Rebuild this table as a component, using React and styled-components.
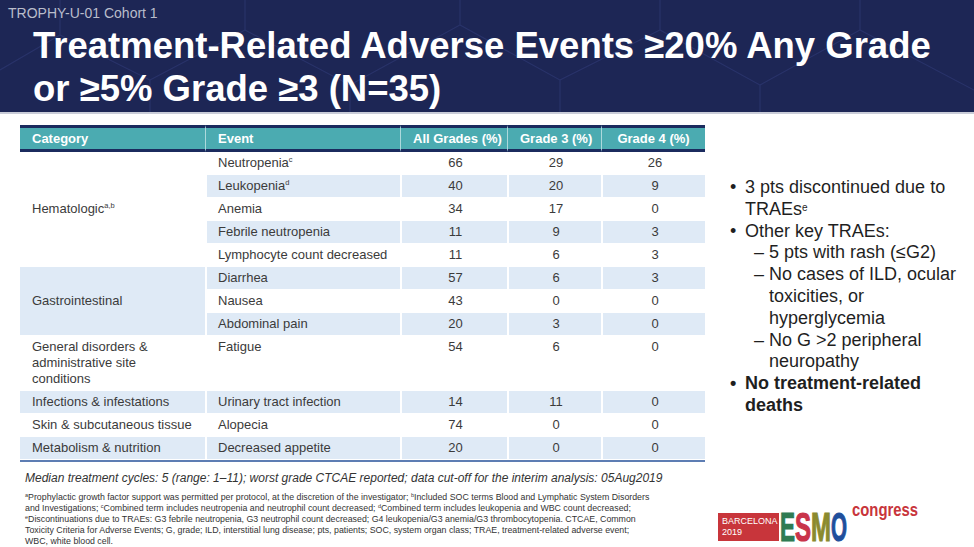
import React from "react";
import styled, { createGlobalStyle } from "styled-components";

const GlobalStyle = createGlobalStyle`
  * { box-sizing: border-box; }
  body {
    margin: 0;
    background: #fff;
    font-family: "Liberation Sans", Arial, sans-serif;
  }
`;

// --- Slide frame ---
const Slide = styled.div`
  width: 974px;
  height: 547px;
  overflow: hidden;
  display: flex;
  flex-direction: column;
  background: #fff;
`;

const Header = styled.header`
  position: relative;
  height: 115px;
  background: #1d2655;
  border-bottom: 2px solid #c9ccd8;
  overflow: hidden;
`;

const HexPattern = styled.svg`
  position: absolute;
  inset: 0;
  pointer-events: none;
`;

const HeaderText = styled.div`
  position: relative;
`;

const Kicker = styled.div`
  padding: 5px 0 0 8px;
  font-size: 14px;
  line-height: 17px;
  color: #b9bdcb;
`;

const Title = styled.h1`
  margin: 0;
  padding: 2px 0 0 33px;
  font-size: 36.5px;
  line-height: 43px;
  font-weight: bold;
  color: #fff;
`;

const Body = styled.div`
  flex: 1;
  display: flex;
`;

const LeftCol = styled.div`
  width: 705px;
  padding: 11px 0 0 20px;
  display: flex;
  flex-direction: column;
`;

const RightCol = styled.div`
  flex: 1;
  display: flex;
  flex-direction: column;
  justify-content: space-between;
`;

// --- Table ---
const Table = styled.table`
  width: 685px;
  table-layout: fixed;
  border-collapse: separate;
  border-spacing: 0;
  font-size: 13px;
  color: #3b3b3b;
  border-bottom: 2px solid #5d7db3;
`;

const HeadRow = styled.tr`
  background: #4babb1;
`;

const Th = styled.th`
  height: 27px;
  padding: 0 12px;
  border-top: 3px solid #1b2b5e;
  border-bottom: 3px solid #1b2b5e;
  border-left: ${(p) => (p.$first ? "none" : "1px solid rgba(255,255,255,0.55)")};
  color: #fff;
  font-weight: bold;
  font-size: 13px;
  line-height: 16px;
  text-align: ${(p) => (p.$center ? "center" : "left")};
  white-space: nowrap;
`;

const Td = styled.td`
  padding: 3px 10px 3px 12px;
  line-height: 16px;
  background: ${(p) => (p.$shade ? "#dfeaf6" : "#fff")};
  border-bottom: 1px solid #fff;
  border-left: ${(p) => (p.$first ? "none" : "2px solid #fff")};
  text-align: ${(p) => (p.$center ? "center" : "left")};
  vertical-align: ${(p) => (p.$top ? "top" : "middle")};
  padding-left: ${(p) => (p.$event ? "11px" : "12px")};
`;

const Sup = styled.sup`
  font-size: 7.5px;
  line-height: 0;
  vertical-align: 5px;
`;

// --- Notes ---
const Note = styled.p`
  margin: 9px 0 0 5px;
  font-size: 12px;
  line-height: 15px;
  font-style: italic;
  color: #333;
`;

const Footnotes = styled.div`
  margin: 6px 0 0 5px;
  font-size: 8.8px;
  line-height: 11px;
  color: #333;
`;

const FootLine = styled.div`
  white-space: nowrap;
`;

const FnSup = styled.sup`
  font-size: 5.5px;
  line-height: 0;
  vertical-align: 3px;
`;

// --- Bullets ---
const BulletList = styled.ul`
  list-style: none;
  margin: 63px 0 0 0;
  padding: 0 0 0 25px;
  font-size: 18px;
  line-height: 21.8px;
  color: #1f1f1f;
`;

const Bullet = styled.li`
  position: relative;
  padding-left: 15px;
  font-weight: ${(p) => (p.$bold ? "bold" : "normal")};

  &::before {
    content: "•";
    position: absolute;
    left: 0;
    top: 0;
  }
`;

const SubList = styled.ul`
  list-style: none;
  margin: 0;
  padding: 0 0 0 10px;
`;

const SubBullet = styled.li`
  position: relative;
  padding-left: 14px;

  &::before {
    content: "–";
    position: absolute;
    left: -1px;
    top: 0;
  }
`;

const BulletSup = styled.sup`
  font-size: 10px;
  line-height: 0;
  vertical-align: 4px;
`;

// --- Logo ---
const Logo = styled.div`
  display: flex;
  align-items: flex-end;
  margin: 0 0 6px 13px;
  height: 40px;
`;

const CityBox = styled.div`
  width: 61px;
  height: 28px;
  background: #c8353b;
  color: #fff;
  font-size: 9px;
  line-height: 11px;
  padding: 3px 0 0 4px;
`;

const EsmoMark = styled.svg`
  display: block;
  margin-left: 1px;
  overflow: visible;
  font-family: "Liberation Sans", Arial, sans-serif;
`;

const hematologic = [
  { event: "Neutropenia", sup: "c", all: 66, g3: 29, g4: 26 },
  { event: "Leukopenia", sup: "d", all: 40, g3: 20, g4: 9 },
  { event: "Anemia", all: 34, g3: 17, g4: 0 },
  { event: "Febrile neutropenia", all: 11, g3: 9, g4: 3 },
  { event: "Lymphocyte count decreased", all: 11, g3: 6, g4: 3 },
];

const gastro = [
  { event: "Diarrhea", all: 57, g3: 6, g4: 3 },
  { event: "Nausea", all: 43, g3: 0, g4: 0 },
  { event: "Abdominal pain", all: 20, g3: 3, g4: 0 },
];

const singles = [
  { cat: "General disorders & administrative site conditions", event: "Fatigue", all: 54, g3: 6, g4: 0, top: true },
  { cat: "Infections & infestations", event: "Urinary tract infection", all: 14, g3: 11, g4: 0, shade: true },
  { cat: "Skin & subcutaneous tissue", event: "Alopecia", all: 74, g3: 0, g4: 0 },
  { cat: "Metabolism & nutrition", event: "Decreased appetite", all: 20, g3: 0, g4: 0, shade: true },
];

const esmoLetters = [
  { ch: "E", x: 0, w: 15, color: "#2f7b52" },
  { ch: "S", x: 15, w: 16, color: "#c9344a" },
  { ch: "M", x: 31, w: 20, color: "#8b8a2e" },
  { ch: "O", x: 51, w: 16, color: "#1f4f9c" },
];

function EventCells({ row, shade, top }) {
  return (
    <>
      <Td $event $shade={shade} $top={top}>
        {row.event}
        {row.sup && <Sup>{row.sup}</Sup>}
      </Td>
      <Td $center $shade={shade} $top={top}>{row.all}</Td>
      <Td $center $shade={shade} $top={top}>{row.g3}</Td>
      <Td $center $shade={shade} $top={top}>{row.g4}</Td>
    </>
  );
}

function HexLines() {
  return (
    <HexPattern width="974" height="115" viewBox="0 0 974 115">
      <g stroke="#29336a" strokeWidth="1.1" fill="none">
        <path d="M0 70 L60 35 L60 -10" />
        <path d="M60 35 L150 80 L150 130" />
        <path d="M150 80 L245 30 L245 -10" />
        <path d="M245 30 L350 85 L350 130" />
        <path d="M350 85 L460 25 L460 -10" />
        <path d="M460 25 L560 80 L560 130" />
        <path d="M560 80 L660 30 L660 -10" />
        <path d="M660 30 L760 85 L760 130" />
        <path d="M760 85 L860 30 L860 -10" />
        <path d="M860 30 L974 90" />
      </g>
    </HexPattern>
  );
}

export default function App() {
  return (
    <>
      <GlobalStyle />
      <Slide>
        <Header>
          <HexLines />
          <HeaderText>
            <Kicker>TROPHY-U-01 Cohort 1</Kicker>
            <Title>
              Treatment-Related Adverse Events ≥20% Any Grade
              <br />
              or ≥5% Grade ≥3 (N=35)
            </Title>
          </HeaderText>
        </Header>

        <Body>
          <LeftCol>
            <Table>
              <colgroup>
                <col style={{ width: 185 }} />
                <col style={{ width: 195 }} />
                <col style={{ width: 107 }} />
                <col style={{ width: 94 }} />
                <col style={{ width: 104 }} />
              </colgroup>
              <thead>
                <HeadRow>
                  <Th $first>Category</Th>
                  <Th>Event</Th>
                  <Th $center>All Grades (%)</Th>
                  <Th $center>Grade 3 (%)</Th>
                  <Th $center>Grade 4 (%)</Th>
                </HeadRow>
              </thead>
              <tbody>
                {hematologic.map((row, i) => (
                  <tr key={row.event}>
                    {i === 0 && (
                      <Td $first rowSpan={hematologic.length}>
                        Hematologic<Sup>a,b</Sup>
                      </Td>
                    )}
                    <EventCells row={row} shade={i % 2 === 1} />
                  </tr>
                ))}
                {gastro.map((row, i) => (
                  <tr key={row.event}>
                    {i === 0 && (
                      <Td $first $shade rowSpan={gastro.length}>
                        Gastrointestinal
                      </Td>
                    )}
                    <EventCells row={row} shade={i % 2 === 0} />
                  </tr>
                ))}
                {singles.map((row) => (
                  <tr key={row.event}>
                    <Td $first $shade={row.shade} $top={row.top}>
                      {row.cat}
                    </Td>
                    <EventCells row={row} shade={row.shade} top={row.top} />
                  </tr>
                ))}
              </tbody>
            </Table>

            <Note>
              Median treatment cycles: 5 (range: 1–11); worst grade CTCAE reported; data cut-off for the interim analysis: 05Aug2019
            </Note>

            <Footnotes>
              <FootLine>
                <FnSup>a</FnSup>Prophylactic growth factor support was permitted per protocol, at the discretion of the investigator;{" "}
                <FnSup>b</FnSup>Included SOC terms Blood and Lymphatic System Disorders
              </FootLine>
              <FootLine>
                and Investigations; <FnSup>c</FnSup>Combined term includes neutropenia and neutrophil count decreased;{" "}
                <FnSup>d</FnSup>Combined term includes leukopenia and WBC count decreased;
              </FootLine>
              <FootLine>
                <FnSup>e</FnSup>Discontinuations due to TRAEs: G3 febrile neutropenia, G3 neutrophil count decreased; G4 leukopenia/G3 anemia/G3 thrombocytopenia. CTCAE, Common
              </FootLine>
              <FootLine>
                Toxicity Criteria for Adverse Events; G, grade; ILD, interstitial lung disease; pts, patients; SOC, system organ class; TRAE, treatment-related adverse event;
              </FootLine>
              <FootLine>WBC, white blood cell.</FootLine>
            </Footnotes>
          </LeftCol>

          <RightCol>
            <BulletList>
              <Bullet>
                3 pts discontinued due to TRAEs<BulletSup>e</BulletSup>
              </Bullet>
              <Bullet>
                Other key TRAEs:
                <SubList>
                  <SubBullet>5 pts with rash (≤G2)</SubBullet>
                  <SubBullet>No cases of ILD, ocular toxicities, or hyperglycemia</SubBullet>
                  <SubBullet>No G &gt;2 peripheral neuropathy</SubBullet>
                </SubList>
              </Bullet>
              <Bullet $bold>No treatment-related deaths</Bullet>
            </BulletList>

            <Logo>
              <CityBox>
                BARCELONA
                <br />
                2019
              </CityBox>
              <EsmoMark width="142" height="40" viewBox="0 0 142 40">
                {esmoLetters.map((l) => (
                  <text
                    key={l.ch}
                    x={l.x}
                    y="40"
                    fontSize="40"
                    fontWeight="bold"
                    fill={l.color}
                    stroke={l.color}
                    strokeWidth="1.2"
                    textLength={l.w}
                    lengthAdjust="spacingAndGlyphs"
                  >
                    {l.ch}
                  </text>
                ))}
                <text
                  x="72"
                  y="15"
                  fontSize="19"
                  fontWeight="bold"
                  fill="#c8353b"
                  textLength="66"
                  lengthAdjust="spacingAndGlyphs"
                >
                  congress
                </text>
              </EsmoMark>
            </Logo>
          </RightCol>
        </Body>
      </Slide>
    </>
  );
}
